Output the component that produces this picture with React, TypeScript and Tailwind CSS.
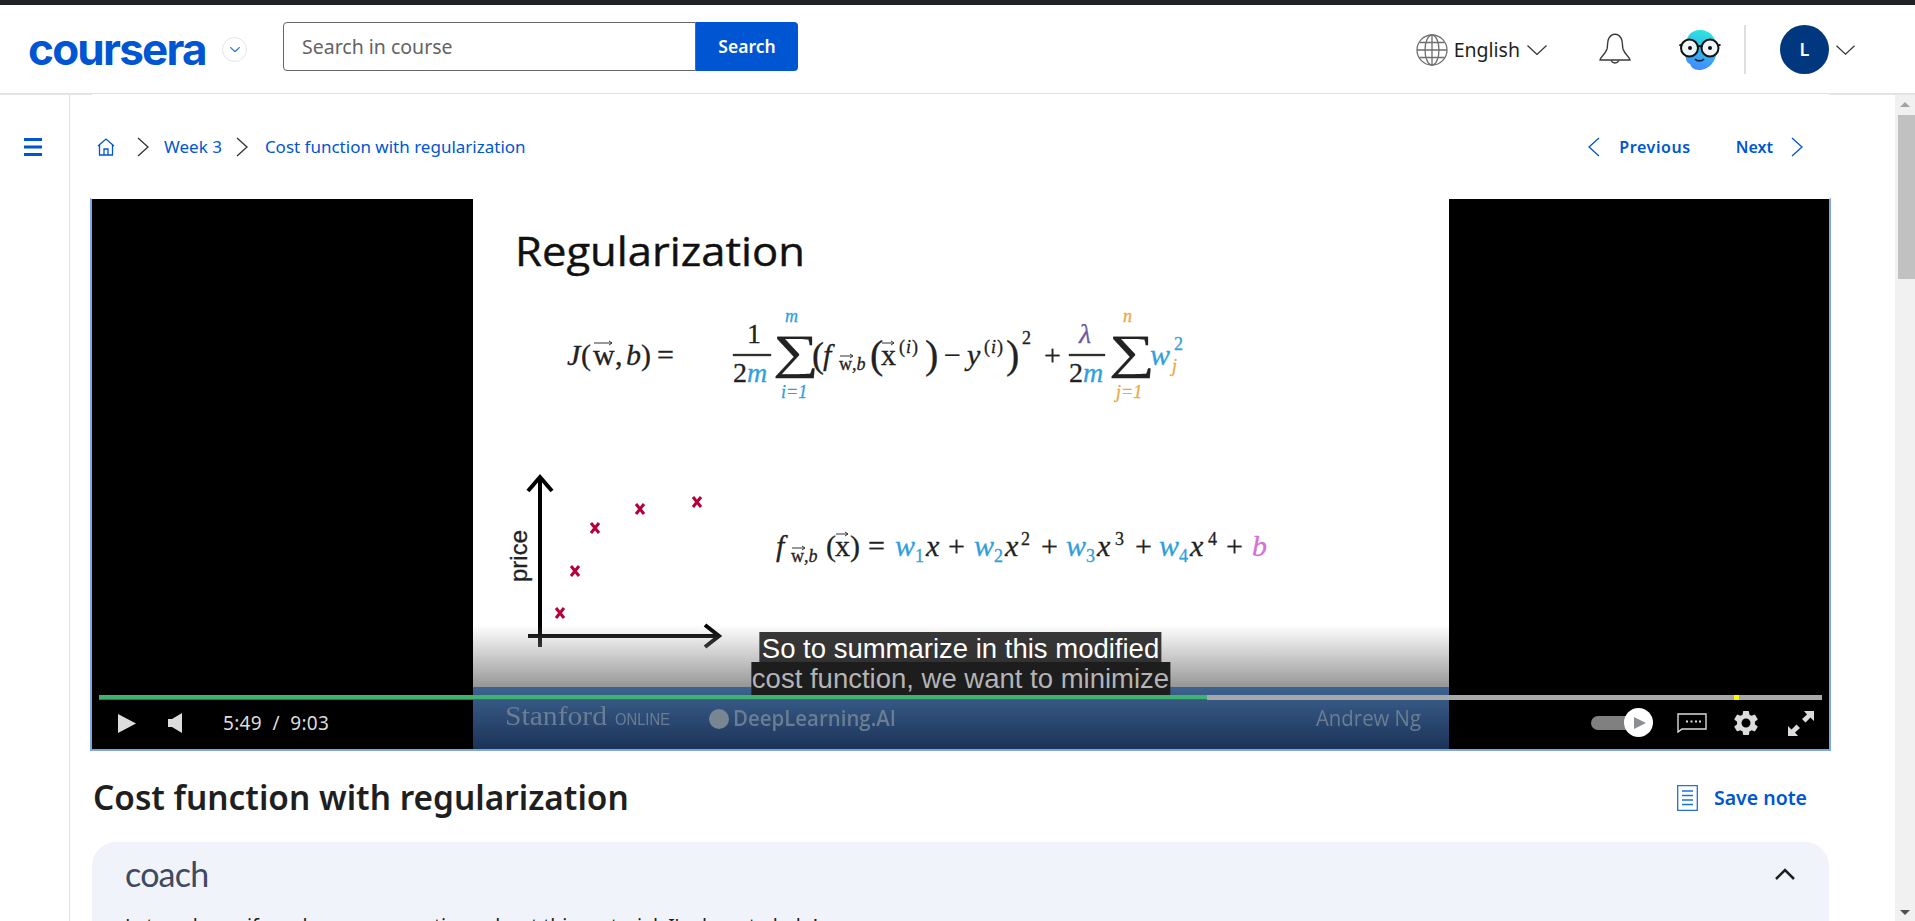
import { MdSettings } from "react-icons/md";

const blue = "#2f9fdc";
const orange = "#eda73d";

function Chevron({ d, className }: { d: string; className: string }) {
  return (
    <svg viewBox="0 0 12 20" fill="none" stroke="currentColor" strokeWidth="1.3" className={className} aria-hidden="true">
      <path d={d} />
    </svg>
  );
}

const CHEVRON_RIGHT = "M1 1l10 9-10 9";
const CHEVRON_LEFT = "M11 1L1 10l10 9";

function ChevronDown({ className, stroke = 1.2 }: { className: string; stroke?: number }) {
  return (
    <svg viewBox="0 0 20 10" fill="none" stroke="currentColor" strokeWidth={stroke} className={className} aria-hidden="true">
      <path d="M.5.5l9.5 9 9.5-9" />
    </svg>
  );
}

function Globe() {
  return (
    <svg viewBox="0 0 32 32" fill="none" stroke="#6f6f6f" strokeWidth="1.3" className="w-[32px] h-[32px]" aria-hidden="true">
      <circle cx="16" cy="16" r="15" />
      <ellipse cx="16" cy="16" rx="7" ry="15" />
      <path d="M16 1v30M1 16h30M3.5 8.5h25M3.5 23.5h25" />
    </svg>
  );
}

function Bell() {
  return (
    <svg viewBox="0 0 32 34" fill="none" stroke="#3a3a3a" strokeWidth="1.4" className="w-[32px] h-[34px]" aria-hidden="true">
      <path d="M1 27c0-3 5-5 7-11 1-4 0-8 2-11 3-5 9-5 12 0 2 3 1 7 2 11 2 6 7 8 7 11z" />
      <path d="M12 27.500a4.500 4.500 0 0 0 8 0" />
    </svg>
  );
}

function CoachBot() {
  return (
    <svg viewBox="0 0 42 40" className="w-[42px] h-[40px]" aria-hidden="true">
      <defs>
        <linearGradient id="bot" x1="0.6" y1="0" x2="0.4" y2="1">
          <stop offset="0" stopColor="#2ce5e0" />
          <stop offset="0.55" stopColor="#35b4ec" />
          <stop offset="1" stopColor="#4488ff" />
        </linearGradient>
      </defs>
      <path d="M21 0c10 0 17 8 17 19s-7 21-18 21c-5 0-8-3-9-6-3-1-5-4-5-15C6 8 11 0 21 0z" fill="url(#bot)" />
      <circle cx="10.500" cy="18" r="8.500" fill="#eef6fa" stroke="#111" strokeWidth="2" />
      <circle cx="31" cy="18" r="8.500" fill="#eef6fa" stroke="#111" strokeWidth="2" />
      <path d="M18.500 17c1-1.500 3.500-1.500 4.500 0M2.500 16L.5 14.500M39 16l2.500-1.500" stroke="#111" strokeWidth="2" fill="none" />
      <circle cx="11" cy="18" r="2" fill="#111" />
      <circle cx="31" cy="18" r="2" fill="#111" />
      <path d="M16 29c2 2.500 7 2.500 9 0" stroke="#124" strokeWidth="1.600" fill="none" />
    </svg>
  );
}

function Header() {
  return (
    <header className="flex h-[89px] shrink-0 items-center border-b border-[#e1e1e1] bg-white">
      <span className="ml-[28px] w-[178px] font-['Inter'] text-[44px] leading-none font-bold tracking-[-1.75px] text-[#0056d2]">
        coursera
      </span>
      <span className="ml-[16px] flex h-[25px] w-[25px] items-center justify-center rounded-full border border-[#e3e6ea] text-[#2a73cc]">
        <ChevronDown className="w-[10px] h-[5px]" stroke={2.4} />
      </span>
      <div className="-mt-[5px] ml-[36px] flex h-[49px] w-[515px]">
        <div className="flex flex-1 items-center rounded-l border border-[#666] pl-[18px] text-[19.500px] text-[#636363]">
          Search in course
        </div>
        <div className="flex w-[102px] items-center justify-center rounded-r bg-[#0056d2] text-[17.500px] font-semibold text-white">
          Search
        </div>
      </div>
      <div className="ml-auto mt-[1px] flex items-center">
        <Globe />
        <span className="ml-[6px] text-[19.500px] text-[#1f1f1f]">English</span>
        <ChevronDown className="ml-[7px] w-[20px] h-[10px] text-[#333]" />
        <span className="ml-[52px]">
          <Bell />
        </span>
        <span className="ml-[48px]">
          <CoachBot />
        </span>
        <span className="ml-[23px] h-[49px] w-[2px] bg-[#dedede]" />
        <span className="ml-[34px] flex h-[49px] w-[49px] items-center justify-center rounded-full bg-[#00377f] text-[18px] font-semibold text-white">
          L
        </span>
        <ChevronDown className="ml-[7px] mr-[60px] w-[19px] h-[10px] text-[#333]" />
      </div>
    </header>
  );
}

function Breadcrumbs() {
  return (
    <div className="flex h-[103px] shrink-0 items-center pl-[27px] pr-[92px] text-[17px] text-[#0056d2]">
      <svg viewBox="0 0 18 18" fill="none" stroke="#0056d2" strokeWidth="1.300" className="w-[18px] h-[18px]" aria-hidden="true">
        <path d="M1 8l8-7 8 7M2.500 7v10h13V7M7 17v-6h4v6" />
      </svg>
      <Chevron d={CHEVRON_RIGHT} className="ml-[22px] w-[12px] h-[20px] text-[#333]" />
      <span className="ml-[15px]">Week 3</span>
      <Chevron d={CHEVRON_RIGHT} className="ml-[14px] w-[12px] h-[20px] text-[#333]" />
      <span className="ml-[17px]">Cost function with regularization</span>
      <div className="ml-auto flex items-center text-[16px] font-semibold">
        <Chevron d={CHEVRON_LEFT} className="w-[12px] h-[20px]" />
        <span className="ml-[19px] tracking-[0.6px]">Previous</span>
        <span className="ml-[45px]">Next</span>
        <Chevron d={CHEVRON_RIGHT} className="ml-[18px] w-[12px] h-[20px]" />
      </div>
    </div>
  );
}

function Mark({ x, y }: { x: number; y: number }) {
  return <path d={`M${x - 4} ${y - 5}l8 10m0-10l-8 10`} stroke="#b5003a" strokeWidth="3" fill="none" />;
}

function Vec({ x, y, w = 12 }: { x: number; y: number; w?: number }) {
  return <path d={`M${x} ${y}h${w}m-3-2l3 2-3 2`} stroke="#333" strokeWidth="1" fill="none" />;
}

function Sigma({ x }: { x: number }) {
  return (
    <text transform={`translate(${x} 368) scale(1.15 0.85)`} fontSize="56" className="font-['Liberation_Serif'] not-italic">
      ∑
    </text>
  );
}

// the video frame, positions are page coordinates
function Slide() {
  const math = "font-['Liberation_Serif'] italic";
  const upright = "font-['Liberation_Serif'] not-italic";
  return (
    <svg viewBox="473 199 976 550" className="h-[550px] w-[976px] shrink-0 bg-white" aria-hidden="true">
      <defs>
        <linearGradient id="fade" x1="0" y1="0" x2="0" y2="1">
          <stop offset="0" stopColor="#999" stopOpacity="0" />
          <stop offset="1" stopColor="#969696" />
        </linearGradient>
        <linearGradient id="band" x1="0" y1="0" x2="0" y2="1">
          <stop offset="0" stopColor="#3c6390" />
          <stop offset="1" stopColor="#1c3257" />
        </linearGradient>
      </defs>

      <text x="515" y="266" fontSize="41" textLength="290" lengthAdjust="spacingAndGlyphs" fill="#111" stroke="#111" strokeWidth="0.4" className="font-['Open_Sans']">
        Regularization
      </text>

      <g fill="#222" stroke="#222" strokeWidth="0.3" fontSize="30" className={math}>
        <text x="567" y="365">J</text>
        <text x="581" y="365" className={upright}>(</text>
        <text x="593" y="365" className={upright}>w</text>
        <Vec x={594} y={343} w={18} />
        <text x="615" y="365" className={upright}>,</text>
        <text x="626" y="365">b</text>
        <text x="641" y="365" className={upright}>)</text>
        <text x="657" y="365" className={upright}>=</text>

        <text x="747" y="343" className={upright} fontSize="28">1</text>
        <rect x="733" y="354" width="38" height="2" fill="#333" />
        <text x="733" y="382" className={upright} fontSize="28">2</text>
        <text x="747" y="382" fontSize="28" fill={blue} stroke={blue}>m</text>
        <Sigma x={773} />
        <text x="785" y="322" fontSize="18" fill={blue} stroke={blue}>m</text>
        <text x="781" y="398" fontSize="18" fill={blue} stroke={blue}>i=1</text>

        <text x="812" y="367" fontSize="36" className={upright}>(</text>
        <text x="823" y="365">f</text>
        <text x="839" y="370" fontSize="18" className={upright}>w</text>
        <text x="852" y="370" fontSize="18">,b</text>
        <Vec x={840} y={356} w={13} />
        <text x="870" y="368" fontSize="40" className={upright}>(</text>
        <text x="881" y="365" className={upright}>x</text>
        <Vec x={882} y={343} w={12} />
        <text x="899" y="353" fontSize="18" className={upright}>(</text>
        <text x="906" y="353" fontSize="18">i</text>
        <text x="912" y="353" fontSize="18" className={upright}>)</text>
        <text x="925" y="368" fontSize="40" className={upright}>)</text>
        <text x="944" y="365" className={upright}>−</text>
        <text x="967" y="365">y</text>
        <text x="984" y="353" fontSize="18" className={upright}>(</text>
        <text x="991" y="353" fontSize="18">i</text>
        <text x="997" y="353" fontSize="18" className={upright}>)</text>
        <text x="1006" y="368" fontSize="40" className={upright}>)</text>
        <text x="1022" y="344" fontSize="18" className={upright}>2</text>
        <text x="1044" y="365" className={upright}>+</text>

        <text x="1079" y="343" fontSize="28" fill="#6b5b9e" stroke="#6b5b9e">λ</text>
        <rect x="1069" y="354" width="36" height="2" fill="#333" />
        <text x="1069" y="382" className={upright} fontSize="28">2</text>
        <text x="1083" y="382" fontSize="28" fill={blue} stroke={blue}>m</text>
        <Sigma x={1109} />
        <text x="1123" y="322" fontSize="18" fill={orange} stroke={orange}>n</text>
        <text x="1116" y="398" fontSize="18" fill={orange} stroke={orange}>j=1</text>
        <text x="1150" y="365" fill={blue} stroke={blue}>w</text>
        <text x="1174" y="350" fontSize="18" fill={blue} stroke={blue} className={upright}>2</text>
        <text x="1172" y="372" fontSize="18" fill={orange} stroke={orange}>j</text>
      </g>

      <g stroke="#000" strokeWidth="4" fill="none">
        <path d="M540 477v170M528 491l12-14 12 14" />
        <path d="M528 636h190M705 625l14 11-14 11" />
      </g>
      <text x="0" y="0" transform="translate(527 582) rotate(-90)" fontSize="24" textLength="52" lengthAdjust="spacingAndGlyphs" fill="#222" stroke="#222" strokeWidth="0.3" className="font-['Liberation_Sans']">
        price
      </text>
      <Mark x={560} y={613} />
      <Mark x={575} y={571} />
      <Mark x={595} y={528} />
      <Mark x={640} y={509} />
      <Mark x={697} y={502} />

      <g fill="#222" stroke="#222" strokeWidth="0.3" fontSize="30" className={math}>
        <text x="776" y="556">f</text>
        <text x="791" y="562" fontSize="18" className={upright}>w</text>
        <text x="804" y="562" fontSize="18">,b</text>
        <Vec x={792} y={548} w={13} />
        <text x="826" y="556" className={upright}>(</text>
        <text x="835" y="556" className={upright}>x</text>
        <Vec x={836} y={534} w={12} />
        <text x="850" y="556" className={upright}>)</text>
        <text x="868" y="556" className={upright}>=</text>
        <text x="895" y="556" fill={blue} stroke={blue}>w</text>
        <text x="915" y="562" fontSize="18" fill={blue} stroke={blue} className={upright}>1</text>
        <text x="926" y="556">x</text>
        <text x="948" y="556" className={upright}>+</text>
        <text x="974" y="556" fill={blue} stroke={blue}>w</text>
        <text x="994" y="562" fontSize="18" fill={blue} stroke={blue} className={upright}>2</text>
        <text x="1005" y="556">x</text>
        <text x="1021" y="545" fontSize="18" className={upright}>2</text>
        <text x="1041" y="556" className={upright}>+</text>
        <text x="1066" y="556" fill={blue} stroke={blue}>w</text>
        <text x="1086" y="562" fontSize="18" fill={blue} stroke={blue} className={upright}>3</text>
        <text x="1097" y="556">x</text>
        <text x="1115" y="545" fontSize="18" className={upright}>3</text>
        <text x="1135" y="556" className={upright}>+</text>
        <text x="1159" y="556" fill={blue} stroke={blue}>w</text>
        <text x="1179" y="562" fontSize="18" fill={blue} stroke={blue} className={upright}>4</text>
        <text x="1190" y="556">x</text>
        <text x="1208" y="545" fontSize="18" className={upright}>4</text>
        <text x="1226" y="556" className={upright}>+</text>
        <text x="1252" y="556" fill="#d56fd8" stroke="#d56fd8">b</text>
      </g>

      <rect x="473" y="625" width="976" height="62" fill="url(#fade)" />
      <rect x="473" y="687" width="976" height="62" fill="url(#band)" />
      <g fill="#6b7d92" className="blur-[0.7px]">
        <text x="505" y="725" fontSize="28" textLength="102" lengthAdjust="spacingAndGlyphs" className="font-['Liberation_Serif']">Stanford</text>
        <text x="615" y="725" fontSize="17" textLength="55" lengthAdjust="spacingAndGlyphs" className="font-['Liberation_Sans']">ONLINE</text>
        <circle cx="719" cy="719" r="10" fill="#788693" />
        <text x="733" y="726" fontSize="22" textLength="163" lengthAdjust="spacingAndGlyphs" className="font-['Open_Sans'] font-semibold">DeepLearning.AI</text>
        <text x="1316" y="726" fontSize="21" textLength="105" lengthAdjust="spacingAndGlyphs" className="font-['Open_Sans']">Andrew Ng</text>
      </g>
    </svg>
  );
}

function Controls() {
  return (
    <div className="absolute inset-x-0 bottom-0 text-[#dcdcdc]">
      <div className="mx-[7px] flex h-[5px] bg-[#a8a8a8]">
        <div className="h-full w-[1108px] border-b border-[#2c7a4d] bg-[#3fb26f]" />
        <div className="ml-[527px] h-full w-[5px] bg-[#ffff00]" />
      </div>
      <div className="flex h-[49px] items-center pb-[3px] pl-[26px] pr-[15px]">
        <svg viewBox="0 0 18 19" className="w-[18px] h-[19px]" aria-hidden="true">
          <path d="M0 0l18 9.500L0 19z" fill="currentColor" />
        </svg>
        <svg viewBox="0 0 14 20" className="ml-[32px] w-[14px] h-[20px]" aria-hidden="true">
          <path d="M0 6h4l10-6v20L4 14H0z" fill="currentColor" />
        </svg>
        <span className="ml-[41px] font-['Noto_Sans'] text-[19px] tracking-[0.3px]">5:49&nbsp;&nbsp;/&nbsp;&nbsp;9:03</span>
        <div className="ml-auto flex items-center">
          <div className="relative h-[14px] w-[44px] rounded-full bg-[#808080]">
            <div className="absolute -right-[18px] -top-[8px] flex h-[29px] w-[29px] items-center justify-center rounded-full bg-white">
              <svg viewBox="0 0 12 12" className="ml-[3px] w-[12px] h-[12px]" aria-hidden="true">
                <path d="M0 0l12 6-12 6z" fill="#8b8f94" />
              </svg>
            </div>
          </div>
          <svg viewBox="0 0 30 20" fill="none" className="ml-[42px] w-[30px] h-[20px]" aria-hidden="true">
            <path d="M1 1h28v15H5l-4 3z" stroke="currentColor" strokeWidth="1.400" />
            <path d="M9 8.500h2m2.500 0h2m2.500 0h2m2 0h2" stroke="currentColor" strokeWidth="2" />
          </svg>
          <MdSettings className="ml-[24px] w-[30px] h-[30px]" />
          <svg viewBox="0 0 26 25" className="ml-[27px] w-[26px] h-[25px]" aria-hidden="true">
            <path d="M16 0h10v10l-3.500-3.500-5 5L14 8l5-4.500zM10 25H0V15l3.500 3.500 5-5L12 17l-5 4.500z" fill="currentColor" />
          </svg>
        </div>
      </div>
    </div>
  );
}

function VideoPlayer() {
  return (
    <div className="relative ml-[20px] flex h-[553px] w-[1741px] shrink-0 justify-center border-x-2 border-b-2 border-t border-[#7fa6e2] border-t-transparent bg-black bg-clip-padding">
      <Slide />
      <div className="absolute left-1/2 top-[433px] flex -translate-x-1/2 flex-col items-center font-['Liberation_Sans'] text-[27.500px] leading-[33px]">
        <span className="bg-[#222]/90 px-[2px] text-white">So to summarize in this modified</span>
        <span className="-mt-[3px] bg-[#1d1d1d] px-[1px] text-[#b4b4b4]">cost function, we want to minimize</span>
      </div>
      <Controls />
    </div>
  );
}

function Scrollbar() {
  return (
    <div className="flex w-[20px] shrink-0 flex-col items-center bg-[#f1f1f1]">
      <div className="mt-[7px] h-0 w-0 border-x-[5px] border-b-[5px] border-x-transparent border-b-[#a3a3a3]" />
      <div className="ml-[2px] mt-[8px] h-[164px] w-[17px] bg-[#c1c1c1]" />
      <div className="mb-[6px] mt-auto h-0 w-0 border-x-[5px] border-t-[5px] border-x-transparent border-t-[#505050]" />
    </div>
  );
}

export default function App() {
  return (
    <div className="flex h-[921px] w-[1915px] flex-col overflow-hidden bg-white font-['Noto_Sans',sans-serif]">
      <div className="h-[5px] shrink-0 bg-[#1f2328]" />
      <Header />
      <div className="flex h-px shrink-0 justify-between">
        <div className="w-[92px] bg-[#e6e6e6]" />
        <div className="w-[86px] bg-[#e6e6e6]" />
      </div>
      <div className="flex min-h-0 flex-1">
        <aside className="w-[70px] shrink-0 border-r border-[#e1e1e1] pl-[24px] pt-[43px]">
          <svg viewBox="0 0 18 18" className="w-[18px] h-[18px]" aria-hidden="true">
            <path d="M0 1.500h18M0 9h18M0 16.500h18" stroke="#0056d2" strokeWidth="3" />
          </svg>
        </aside>
        <main className="flex min-w-0 flex-1 flex-col">
          <Breadcrumbs />
          <VideoPlayer />
          <div className="ml-[23px] flex h-[91px] w-[1737px] shrink-0 items-center pt-[2px]">
            <h1 className="mt-[1px] text-[33.400px] leading-none font-semibold text-[#1f1f1f]">Cost function with regularization</h1>
            <div className="ml-auto mr-[23px] flex items-center text-[19.500px] font-semibold text-[#0056d2]">
              <svg viewBox="0 0 21 26" fill="none" stroke="#1f6fdc" strokeWidth="1.300" className="w-[21px] h-[26px]" aria-hidden="true">
                <path d="M.7.7h19.600v24.600H.7zM5 6h11M5 10.500h11M5 15h11M5 19.500h11" />
              </svg>
              <span className="ml-[16px]">Save note</span>
            </div>
          </div>
          <section className="ml-[22px] w-[1737px] flex-1 rounded-t-[24px] bg-[#f0f3f9] pl-[33px] pr-[34px] pt-[12px]">
            <div className="flex items-center justify-between">
              <span className="font-['Lato'] text-[34px] leading-[40px] tracking-[-0.8px] text-[#3d4a60]">coach</span>
              <svg viewBox="0 0 20 12" fill="none" stroke="#1f1f1f" strokeWidth="2.500" className="w-[20px] h-[12px]" aria-hidden="true">
                <path d="M1 11l9-9 9 9" />
              </svg>
            </div>
            <p className="mt-[20px] text-[19.500px] leading-[24px] text-[#1f1f1f]">
              Let me know if you have any questions about this material. I'm here to help!
            </p>
          </section>
        </main>
        <Scrollbar />
      </div>
    </div>
  );
}
